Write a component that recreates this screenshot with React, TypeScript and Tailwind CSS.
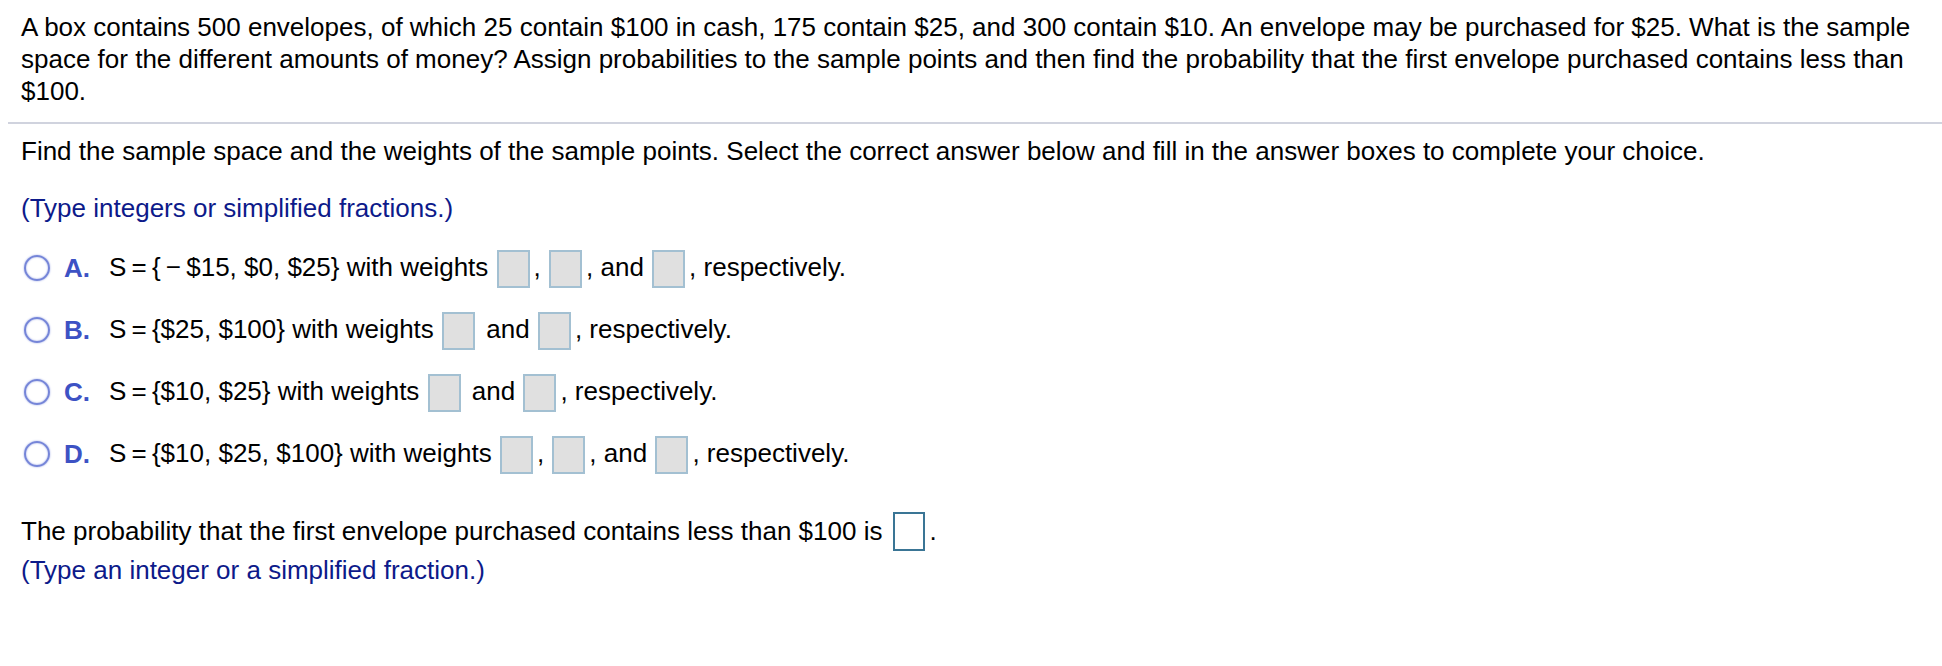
export default function App() {
  const box = 'inline-block align-middle w-[33px] h-[38px] ml-[1px] mr-[4px] bg-[#e0e0e0] border-2 border-[#a3c0d2]'
  const t = '\u2009'

  const options = [
    {
      letter: 'A.',
      body: (
        <>
          {`S${t}=${t}{${t}−${t}$15, $0, $25} with weights `}
          <span className={box} />,{' '}
          <span className={box} />, and{' '}
          <span className={box} />, respectively.
        </>
      ),
    },
    {
      letter: 'B.',
      body: (
        <>
          {`S${t}=${t}{$25, $100} with weights `}
          <span className={box} /> and{' '}
          <span className={box} />, respectively.
        </>
      ),
    },
    {
      letter: 'C.',
      body: (
        <>
          {`S${t}=${t}{$10, $25} with weights `}
          <span className={box} /> and{' '}
          <span className={box} />, respectively.
        </>
      ),
    },
    {
      letter: 'D.',
      body: (
        <>
          {`S${t}=${t}{$10, $25, $100} with weights `}
          <span className={box} />,{' '}
          <span className={box} />, and{' '}
          <span className={box} />, respectively.
        </>
      ),
    },
  ]

  return (
    <div className="w-[1942px] h-[666px] bg-white text-black text-[26px] font-['Liberation_Sans',Arial,sans-serif]">
      <p className="pl-[21px] pr-[16px] pt-[11px] leading-[32px]">
        A box contains 500 envelopes, of which 25 contain $100 in cash, 175 contain $25, and 300 contain $10. An
        envelope may be purchased for $25. What is the sample space for the different amounts of money? Assign
        probabilities to the sample points and then find the probability that the first envelope purchased contains
        less than $100.
      </p>

      <div className="mt-[15px] ml-[8px] h-[2px] bg-[#d0d3de]" />

      <div className="px-[21px]">
        <p className="mt-[11px] leading-[32px]">
          Find the sample space and the weights of the sample points. Select the correct answer below and fill in the
          answer boxes to complete your choice.
        </p>
        <p className="mt-[25px] leading-[32px] text-[#0d1a8a]">(Type integers or simplified fractions.)</p>

        <div className="mt-[13px]">
          {options.map(o => (
            <div key={o.letter} className="flex items-center h-[62px]">
              <span className="ml-[3px] w-[26px] h-[26px] rounded-full border-2 border-[#7585d8] shadow-[0_0_2px_#9aa6e4,inset_0_0_2px_#9aa6e4] shrink-0" />
              <span className="ml-[14px] w-[26px] font-bold text-[#3d52c4]">{o.letter}</span>
              <span className="ml-[19px] whitespace-pre">{o.body}</span>
            </div>
          ))}
        </div>

        <div className="mt-[27px] flex items-center h-[39px] whitespace-nowrap">
          The probability that the first envelope purchased contains less than $100 is
          <span className="inline-block w-[32px] h-[39px] ml-[11px] mr-[4px] bg-white border-2 border-[#3a7595]" />.
        </div>
        <p className="leading-[32px] text-[#0d1a8a] mt-[3px]">(Type an integer or a simplified fraction.)</p>
      </div>
    </div>
  )
}
